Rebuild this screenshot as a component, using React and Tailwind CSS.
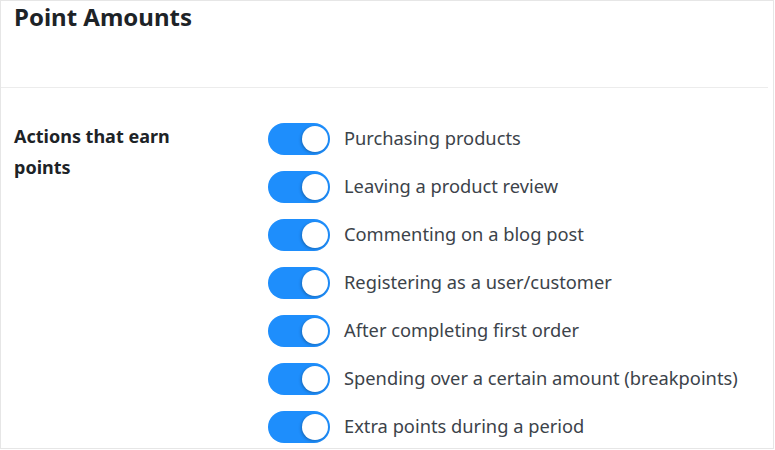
import { useState } from 'react'

const actions = [
  'Purchasing products',
  'Leaving a product review',
  'Commenting on a blog post',
  'Registering as a user/customer',
  'After completing first order',
  'Spending over a certain amount (breakpoints)',
  'Extra points during a period',
]

function Toggle({ on, onChange }) {
  return (
    <button
      type="button"
      onClick={onChange}
      className={`relative h-[32px] w-[62px] shrink-0 rounded-full ${on ? 'bg-[#1e8efc]' : 'bg-[#c3c4c7]'}`}
    >
      <span
        className={`absolute top-[3px] h-[26px] w-[26px] rounded-full bg-white shadow-[-1px_1px_3px_rgba(0,0,0,0.25)] ${on ? 'right-[2px]' : 'left-[2px]'}`}
      />
    </button>
  )
}

export default function App() {
  const [enabled, setEnabled] = useState(actions.map(() => true))

  const flip = (i) => setEnabled((prev) => prev.map((v, j) => (j === i ? !v : v)))

  return (
    <div className="h-[450px] w-[775px] bg-white font-['Noto_Sans',sans-serif]">
      <div className="h-[449px] w-[774px] overflow-hidden border border-[#e6e6e6]">
        <div className="h-[86px] pl-[13px]">
          <h2 className="text-[24px] font-bold leading-[32px] text-[#1d2327]">Point Amounts</h2>
        </div>
        <div className="mr-[5px] h-px bg-[#ececec]" />
        <div className="flex pl-[13px] pt-[35px]">
          <div className="w-[254px] shrink-0 mt-[-2px] text-[18px] font-bold leading-[31px] text-[#1d2327]">
            Actions that earn
            <br />
            points
          </div>
          <div className="flex flex-col gap-[16px]">
            {actions.map((label, i) => (
              <div key={label} className="flex items-center gap-[14px]">
                <Toggle on={enabled[i]} onChange={() => flip(i)} />
                <span className="mt-[-2px] text-[18.3px] text-[#3c434a]">{label}</span>
              </div>
            ))}
          </div>
        </div>
      </div>
    </div>
  )
}
